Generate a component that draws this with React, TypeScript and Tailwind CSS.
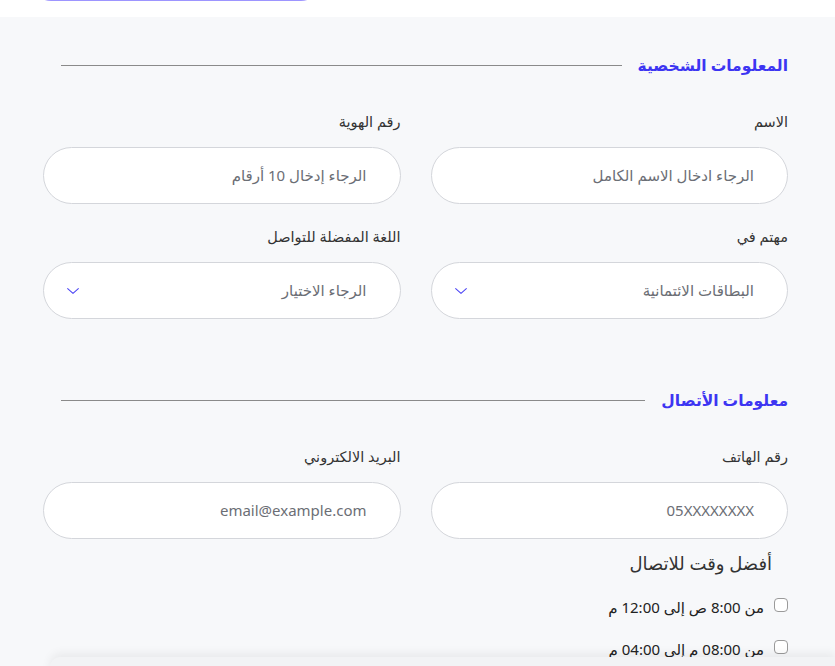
import type React from "react";

const fontStack = { fontFamily: '"Noto Sans", "DejaVu Sans", sans-serif' };

interface FieldProps {
  label: string;
  placeholder: string;
  select?: boolean;
}

function Chevron(): React.JSX.Element {
  return (
    <svg className="w-[16px] h-[16px] text-[#4b44f5]" viewBox="0 0 24 24" fill="none" stroke="currentColor" strokeWidth={1.6} strokeLinecap="round" strokeLinejoin="round">
      <path d="M4 8.5l8 7 8-7" />
    </svg>
  );
}

function Field({ label, placeholder, select }: FieldProps): React.JSX.Element {
  return (
    <div className="flex flex-col">
      <label className="text-[14.5px] leading-[20px] text-[#333]">{label}</label>
      <div className="mt-[16px] h-[57px] rounded-full border border-[#d4d6db] bg-white flex items-center justify-between pr-[33px] pl-[21px]">
        <span className="text-[15px] text-[#6b6e75]">{placeholder}</span>
        {select && <Chevron />}
      </div>
    </div>
  );
}

function SectionTitle({ title }: { title: string }): React.JSX.Element {
  return (
    <div className="flex items-center gap-[16px] h-[28px]">
      <h2 className="text-[15.5px] font-bold text-[#3d35f2] whitespace-nowrap">{title}</h2>
      <div className="flex-1 h-px bg-[#8a8a8a] mb-[2px]" />
    </div>
  );
}

function TimeOption({ text }: { text: string }): React.JSX.Element {
  return (
    <label className="flex items-center gap-[10px] h-[20px]">
      <span className="w-[14px] h-[14px] rounded-[4px] border border-[#9a9a9a] bg-white mb-[4px]" />
      <span className="text-[15px] text-[#222]">{text}</span>
    </label>
  );
}

export default function App(): React.JSX.Element {
  return (
    <div dir="rtl" style={fontStack} className="min-h-[666px] bg-[#f7f8fa] relative overflow-hidden">
      {/* top bar */}
      <div className="h-[17px] bg-white overflow-hidden flex" dir="ltr">
        <div className="ml-[31px] w-[290px] h-[40px] mt-[-39px] rounded-full bg-[#9d95ff]" />
      </div>

      <div className="pr-[47px] pl-[61px] pt-[35px]">
        <SectionTitle title="المعلومات الشخصية" />
      </div>

      <div className="pr-[47px] pl-[43px]">
        <div className="grid grid-cols-2 gap-x-[30px] gap-y-[22px] mt-[31px]">
          <Field label="الاسم" placeholder="الرجاء ادخال الاسم الكامل" />
          <Field label="رقم الهوية" placeholder="الرجاء إدخال 10 أرقام" />
          <Field label="مهتم في" placeholder="البطاقات الائتمانية" select />
          <Field label="اللغة المفضلة للتواصل" placeholder="الرجاء الاختيار" select />
        </div>
      </div>

      <div className="pr-[47px] pl-[61px] mt-[68px]">
        <SectionTitle title="معلومات الأتصال" />
      </div>

      <div className="pr-[47px] pl-[43px]">
        <div className="grid grid-cols-2 gap-x-[30px] mt-[31px]">
          <Field label="رقم الهاتف" placeholder="05XXXXXXXX" />
          <Field label="البريد الالكتروني" placeholder="email@example.com" />
        </div>

        <h3 className="mt-[11px] mr-[16px] text-[18px] leading-[26px] text-[#333]">أفضل وقت للاتصال</h3>
        <div className="mt-[21px] flex flex-col gap-[22px]">
          <TimeOption text="من 8:00 ص إلى 12:00 م" />
          <TimeOption text="من 08:00 م إلى 04:00 م" />
        </div>
      </div>

      {/* bottom bar peeking in */}
      <div className="absolute left-[50px] right-0 top-[657px] h-[40px] bg-[#f2f3f5] shadow-[0_-4px_10px_rgba(0,0,0,0.06)] rounded-tl-[10px]" />
    </div>
  );
}
